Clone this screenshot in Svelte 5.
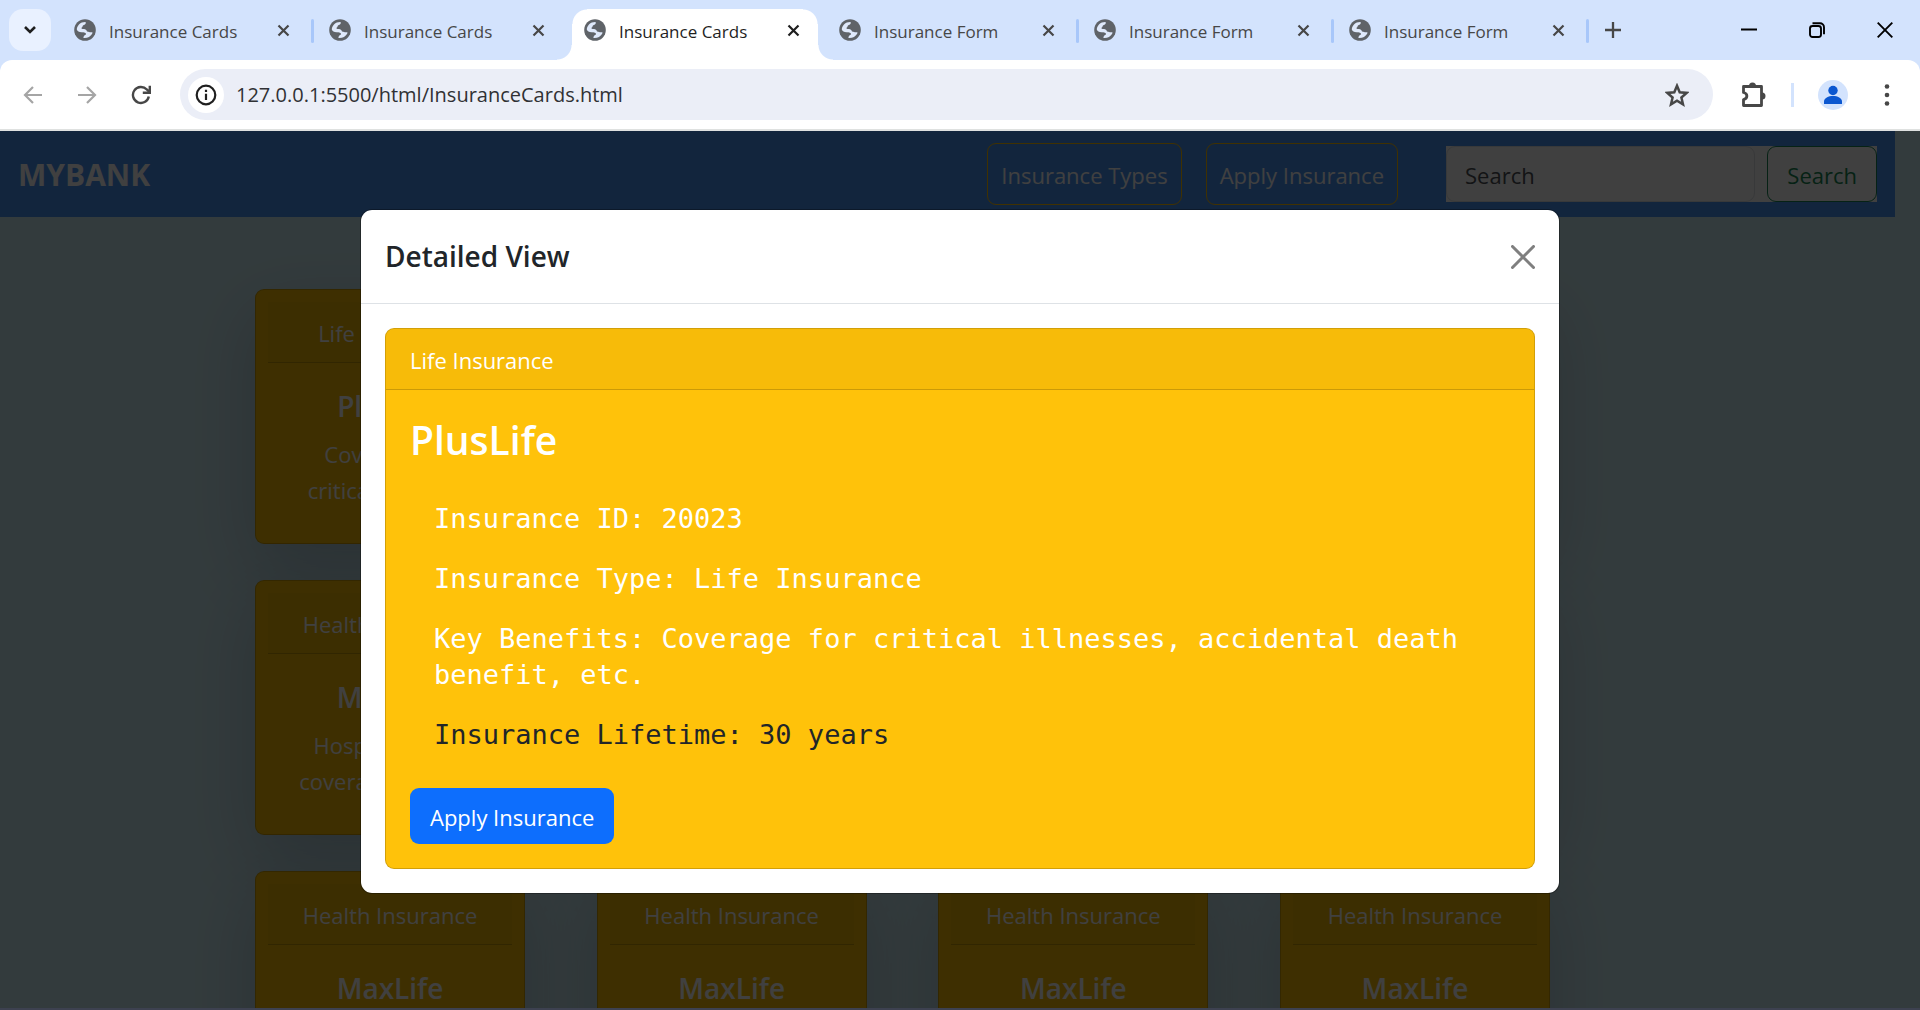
<script>
  const tabs = [
    { title: 'Insurance Cards', divider: true },
    { title: 'Insurance Cards' },
    { title: 'Insurance Cards', active: true },
    { title: 'Insurance Form', divider: true },
    { title: 'Insurance Form', divider: true },
    { title: 'Insurance Form', divider: true }
  ];

  const plus = { type: 'Life Insurance', name: 'PlusLife', text: 'Coverage for\ncritical illnesses,' };
  const max = { type: 'Health Insurance', name: 'MaxLife', text: 'Hospitalization\ncoverage, surgery' };
  const cards = [plus, plus, plus, plus, max, max, max, max, max, max, max, max];

  let url = $state('127.0.0.1:5500/html/InsuranceCards.html');
  let query = $state('');
  let open = $state(true);
</script>

<div class="browser">
  <header class="tabstrip">
    <button class="tab-search" aria-label="Search tabs">
      <svg width="14" height="14" viewBox="0 0 14 14"><path d="M2 4l5 5 5-5" fill="none" stroke="#1f1f1f" stroke-width="2.6" /></svg>
    </button>
    <div class="tabs">
      {#each tabs as tab}
        <div class="tab" class:active={tab.active} class:divider={tab.divider}>
          <svg width="22" height="22" viewBox="0 0 22 22">
            <circle cx="11" cy="11" r="10.800" fill="#5f6368" />
            <path d="M2.800 10.500C3 6.500 6.500 2.800 11.500 3C12.500 4.500 11 6 9.300 6.300C8.300 6.600 9 8 7.800 8.600C7 9 7.500 10 8.500 10C11 10 12.500 10.500 13 12.500C15 12.500 15.500 13.500 17.500 13.300C18.500 13.200 18.800 13.500 18 15C16.500 17.500 13.500 19.300 9.500 19C9 17.500 10.500 16 12 15.500C12.500 13.500 10 13.500 7.500 13.200C5 13 3.500 12.500 2.800 10.500z" fill="#dfe9fb" />
          </svg>
          <span class="tab-title">{tab.title}</span>
          <button class="tab-close" aria-label="Close tab">
            <svg width="13" height="13" viewBox="0 0 13 13"><path d="M1.500 1.500l10 10M11.500 1.500l-10 10" fill="none" stroke="currentColor" stroke-width="2.200" /></svg>
          </button>
        </div>
      {/each}
      <button class="new-tab" aria-label="New tab">
        <svg width="16" height="16" viewBox="0 0 16 16"><path d="M8 0v16M0 8h16" stroke="#474747" stroke-width="2.300" /></svg>
      </button>
    </div>
    <div class="window-controls">
      <button aria-label="Minimize"><svg width="16" height="16" viewBox="0 0 16 16"><path d="M0 7.500h16" stroke="#000" stroke-width="2" /></svg></button>
      <button aria-label="Restore">
        <svg width="16" height="16" viewBox="0 0 16 16" fill="none" stroke="#000" stroke-width="1.900"><rect x="1" y="4" width="11" height="11" rx="2.500" /><path d="M3.500 1.200h7.500a4 4 0 0 1 4 4v7" /></svg>
      </button>
      <button aria-label="Close"><svg width="16" height="16" viewBox="0 0 16 16"><path d="M.7 .7l14.600 14.600M15.300 .7L.7 15.300" stroke="#000" stroke-width="1.900" /></svg></button>
    </div>
  </header>

  <div class="toolbar">
    <button aria-label="Back"><svg width="20" height="20" viewBox="0 0 20 20" fill="none" stroke="#a5a5a5" stroke-width="2.200"><path d="M19 10H2M10 2l-8 8 8 8" /></svg></button>
    <button aria-label="Forward"><svg width="20" height="20" viewBox="0 0 20 20" fill="none" stroke="#a5a5a5" stroke-width="2.200"><path d="M1 10h17M10 2l8 8-8 8" /></svg></button>
    <button aria-label="Reload">
      <svg width="20" height="20" viewBox="0 0 20 20" fill="none" stroke="#474747" stroke-width="2.400"><path d="M17.800 11.500A8 8 0 1 1 15.800 4.500L18.500 7" /><path d="M18.800 .8v7h-7" /></svg>
    </button>
    <div class="omnibox">
      <button class="site-info" aria-label="Site information">
        <svg width="22" height="22" viewBox="0 0 22 22"><circle cx="11" cy="11" r="9.300" fill="none" stroke="#1f1f1f" stroke-width="2.200" /><path d="M11 9.800v6.200M11 5.800v2.300" stroke="#1f1f1f" stroke-width="2.200" /></svg>
      </button>
      <input type="text" aria-label="Address" bind:value={url} />
      <button aria-label="Bookmark this page">
        <svg width="24" height="24" viewBox="0 0 24 24"><path d="M12 2.800l2.700 6.500 7 .6-5.300 4.600 1.600 6.800-6-3.600-6 3.600 1.600-6.800L2.300 9.900l7-.6z" fill="none" stroke="#474747" stroke-width="2.500" /></svg>
      </button>
    </div>
    <button class="extensions" aria-label="Extensions">
      <svg width="28" height="28" viewBox="0 0 28 28"><path d="M4.500 5.500h18v19h-18v-6c4.500-1 4.500-6 0-7z" fill="none" stroke="#474747" stroke-width="2.800" stroke-linejoin="round" /><path d="M10 5a3.500 3.500 0 0 1 7 0zM23 11.500a3.500 3.500 0 0 1 0 7z" fill="#474747" /></svg>
    </button>
    <span class="tool-divider"></span>
    <button class="profile" aria-label="Profile">
      <svg width="30" height="30" viewBox="0 0 30 30"><circle cx="15" cy="15" r="15" fill="#d3e3fd" /><circle cx="15" cy="10.500" r="4.700" fill="#0b57d0" /><path d="M6 24v-2.500c0-3.500 4.500-5.500 9-5.500s9 2 9 5.500V24z" fill="#0b57d0" /></svg>
    </button>
    <button class="menu" aria-label="Menu">
      <svg width="6" height="22" viewBox="0 0 6 22" fill="#474747"><circle cx="3" cy="2.500" r="2.300" /><circle cx="3" cy="11" r="2.300" /><circle cx="3" cy="19.500" r="2.300" /></svg>
    </button>
  </div>

  <div class="viewport">
    <div class="page">
      <nav class="navbar">
        <a class="brand" href="#home">MYBANK</a>
        <div class="nav-actions">
          <a class="nav-button" href="#types">Insurance Types</a>
          <a class="nav-button" href="#apply">Apply Insurance</a>
          <form class="search" onsubmit={(e) => e.preventDefault()}>
            <input type="search" placeholder="Search" aria-label="Search" bind:value={query} />
            <button>Search</button>
          </form>
        </div>
      </nav>
      <main class="cards">
        {#each cards as card}
          <article class="card">
            <div class="card-type">{card.type}</div>
            <div class="card-body">
              <h2>{card.name}</h2>
              <p>{card.text}</p>
            </div>
          </article>
        {/each}
      </main>
    </div>

    {#if open}
      <div class="backdrop">
        <div class="modal" role="dialog" aria-modal="true" aria-labelledby="modal-title">
          <div class="modal-header">
            <h1 id="modal-title">Detailed View</h1>
            <button aria-label="Close" onclick={() => (open = false)}>
              <svg width="24" height="24" viewBox="0 0 24 24"><path d="M1.500 1.500l21 21M22.500 1.500l-21 21" stroke="#7f7f7f" stroke-width="3" stroke-linecap="round" /></svg>
            </button>
          </div>
          <div class="modal-body">
            <section class="detail">
              <div class="detail-type">Life Insurance</div>
              <div class="detail-body">
                <h2>PlusLife</h2>
                <div class="facts">
                  <p>Insurance ID: 20023</p>
                  <p>Insurance Type: Life Insurance</p>
                  <p>Key Benefits: Coverage for critical illnesses, accidental death benefit, etc.</p>
                  <p class="dark">Insurance Lifetime: 30 years</p>
                </div>
                <button class="apply">Apply Insurance</button>
              </div>
            </section>
          </div>
        </div>
      </div>
    {/if}
  </div>
</div>

<style>
  :global(body) { margin: 0; }
  .browser {
    height: 100vh;
    display: flex;
    flex-direction: column;
    box-sizing: border-box;
    border-bottom: 2px solid #3d4150;
    background: #d3e3fd;
    font-family: "Open Sans", "Noto Sans", sans-serif;
    font-size: 22px;
    line-height: 36px;
    overflow: hidden;
  }
  .browser :global(*) { box-sizing: border-box; }
  svg { display: block; flex: none; }
  button {
    border: 0;
    padding: 0;
    background: none;
    font: inherit;
    color: inherit;
    display: flex;
    align-items: center;
    justify-content: center;
    flex: none;
  }
  input { font: inherit; border: 0; min-width: 0; outline: 0; }
  h1, h2, p { margin: 0; }
  a { text-decoration: none; }

  .tabstrip { height: 60px; flex: none; display: flex; align-items: center; padding: 0 1px 0 9px; }
  .tab-search { width: 42px; height: 42px; border-radius: 14px; background: #e9f1ff; }
  .tabs { flex: 1; min-width: 0; height: 60px; display: flex; padding-left: 6px; }
  .tab {
    position: relative;
    flex: 0 1 255px;
    min-width: 0;
    height: 60px;
    display: flex;
    align-items: center;
    padding: 0 22px 0 17px;
    color: #474747;
  }
  .tab.divider::after {
    content: "";
    position: absolute;
    right: -2px;
    top: 19px;
    width: 3px;
    height: 24px;
    border-radius: 2px;
    background: #a8c7fa;
  }
  .tab > :global(*) { z-index: 1; }
  .tab.active { color: #1f1f1f; }
  .tab.active::before {
    content: "";
    position: absolute;
    inset: 9px -11px 0 -10px;
    background:
      radial-gradient(circle at 0 0, transparent 14px, #fff 15px) 0 100% / 15px 15px no-repeat,
      radial-gradient(circle at 100% 0, transparent 14px, #fff 15px) 100% 100% / 15px 15px no-repeat,
      radial-gradient(circle at 100% 100%, #fff 14px, transparent 15px) 15px 0 / 15px 15px no-repeat,
      radial-gradient(circle at 0 100%, #fff 14px, transparent 15px) calc(100% - 15px) 0 / 15px 15px no-repeat,
      linear-gradient(#fff, #fff) 15px 15px / calc(100% - 30px) 100% no-repeat,
      linear-gradient(#fff, #fff) 30px 0 / calc(100% - 60px) 15px no-repeat;
  }
  .tab-title { flex: 1; min-width: 0; padding: 4px 0 0 13px; font-size: 17px; line-height: 24px; white-space: nowrap; overflow: hidden; }
  .tab-close { width: 13px; height: 24px; }
  .new-tab { width: 52px; height: 60px; }
  .window-controls { display: flex; }
  .window-controls button { width: 68px; height: 60px; }

  .toolbar {
    height: 71px;
    flex: none;
    display: flex;
    align-items: center;
    gap: 34px;
    padding: 0 30px 0 23px;
    background: #fff;
    border-bottom: 2px solid #dfe1e0;
    border-radius: 12px 12px 0 0;
  }
  .omnibox {
    flex: 1;
    min-width: 0;
    height: 51px;
    margin-left: -5px;
    display: flex;
    align-items: center;
    padding: 0 24px 0 8px;
    border-radius: 26px;
    background: #ebeef7;
  }
  .site-info { width: 36px; height: 36px; border-radius: 18px; background: #fff; }
  .omnibox input { flex: 1; padding: 0 0 0 12px; background: none; font-size: 20px; line-height: 30px; color: #303134; }
  .extensions { margin-left: -8px; }
  .tool-divider { width: 3px; height: 24px; margin-left: -10px; background: #d3e3fd; }
  .profile { margin-left: -10px; }
  .menu { margin-left: 2px; }

  .viewport { position: relative; flex: 1; min-height: 0; overflow: hidden; background: #ccebf2; }
  .navbar {
    min-height: 86px;
    margin-right: 25px;
    padding: 0 18px;
    display: flex;
    align-items: center;
    justify-content: space-between;
    background: #4894f4;
    color: #fff;
  }
  .brand { padding-top: 2px; font-size: 30px; font-weight: 700; color: #fff; }
  .nav-actions { display: flex; align-items: center; gap: 24px; }
  .nav-button { padding: 13px 13px 11px; border: 1px solid #ffc107; border-radius: 9px; color: #fff; }
  .search { width: 431px; margin-left: 24px; display: flex; gap: 12px; background: #fff; }
  .search input { flex: 1; height: 56px; padding: 2px 19px 0 18px; border: 1px solid #dee2e6; border-radius: 9px; background: #fff; }
  .search input::placeholder { color: #4c5055; opacity: 1; }
  .search button { height: 56px; padding: 2px 19px 0; border: 1px solid #198754; border-radius: 9px; color: #198754; }

  .cards {
    width: 1295px;
    max-width: 100%;
    margin-left: 255px;
    padding-top: 72px;
    display: grid;
    grid-template-columns: repeat(4, 270px);
    justify-content: space-between;
    row-gap: 36px;
  }
  .card {
    padding: 12px;
    border: 1px solid rgba(0, 0, 0, 0.175);
    border-radius: 9px;
    background: #f6bc06;
    box-shadow: 0 24px 72px rgba(0, 0, 40, 0.175);
    color: #fff;
    text-align: center;
  }
  .card-type { padding: 13px 12px 11px; background: rgba(0, 0, 0, 0.03); border-bottom: 1px solid rgba(0, 0, 0, 0.175); }
  .card-body { padding: 25px 14px 23px; }
  .card h2 { margin-bottom: 12px; font-size: 28px; line-height: 36px; font-weight: 600; }
  .card p { white-space: pre-line; }

  .backdrop {
    position: absolute;
    inset: 0;
    display: flex;
    justify-content: center;
    align-items: flex-start;
    padding: 78px 24px 0;
    background: rgba(0, 0, 0, 0.75);
  }
  .modal {
    width: 100%;
    max-width: 1200px;
    border: 1px solid rgba(0, 0, 0, 0.3);
    border-radius: 12px;
    background: #fff;
    background-clip: padding-box;
    color: #212529;
  }
  .modal-header {
    display: flex;
    align-items: center;
    justify-content: space-between;
    padding: 24px;
    border-bottom: 1px solid #dee2e6;
  }
  .modal-header h1 { font-size: 28px; line-height: 45px; font-weight: 600; }
  .modal-body { padding: 24px; }
  .detail {
    border: 1px solid rgba(0, 0, 0, 0.175);
    border-radius: 9px;
    background: #ffc20a;
    color: #fff;
    overflow: hidden;
  }
  .detail-type { padding: 13px 24px 11px; background: rgba(0, 0, 0, 0.03); border-bottom: 1px solid rgba(0, 0, 0, 0.175); }
  .detail-body { padding: 25px 24px 24px; }
  .detail-body h2 { margin-bottom: 12px; font-size: 39px; line-height: 50px; font-weight: 600; }
  .facts {
    display: flex;
    flex-direction: column;
    gap: 24px;
    padding: 24px 20px 35px 24px;
    font-family: "DejaVu Sans Mono", "Liberation Mono", monospace;
    font-size: 27px;
  }
  .facts .dark { color: #212529; }
  .apply { height: 56px; padding: 2px 20px 0; border-radius: 9px; background: #0d6efd; }
</style>
